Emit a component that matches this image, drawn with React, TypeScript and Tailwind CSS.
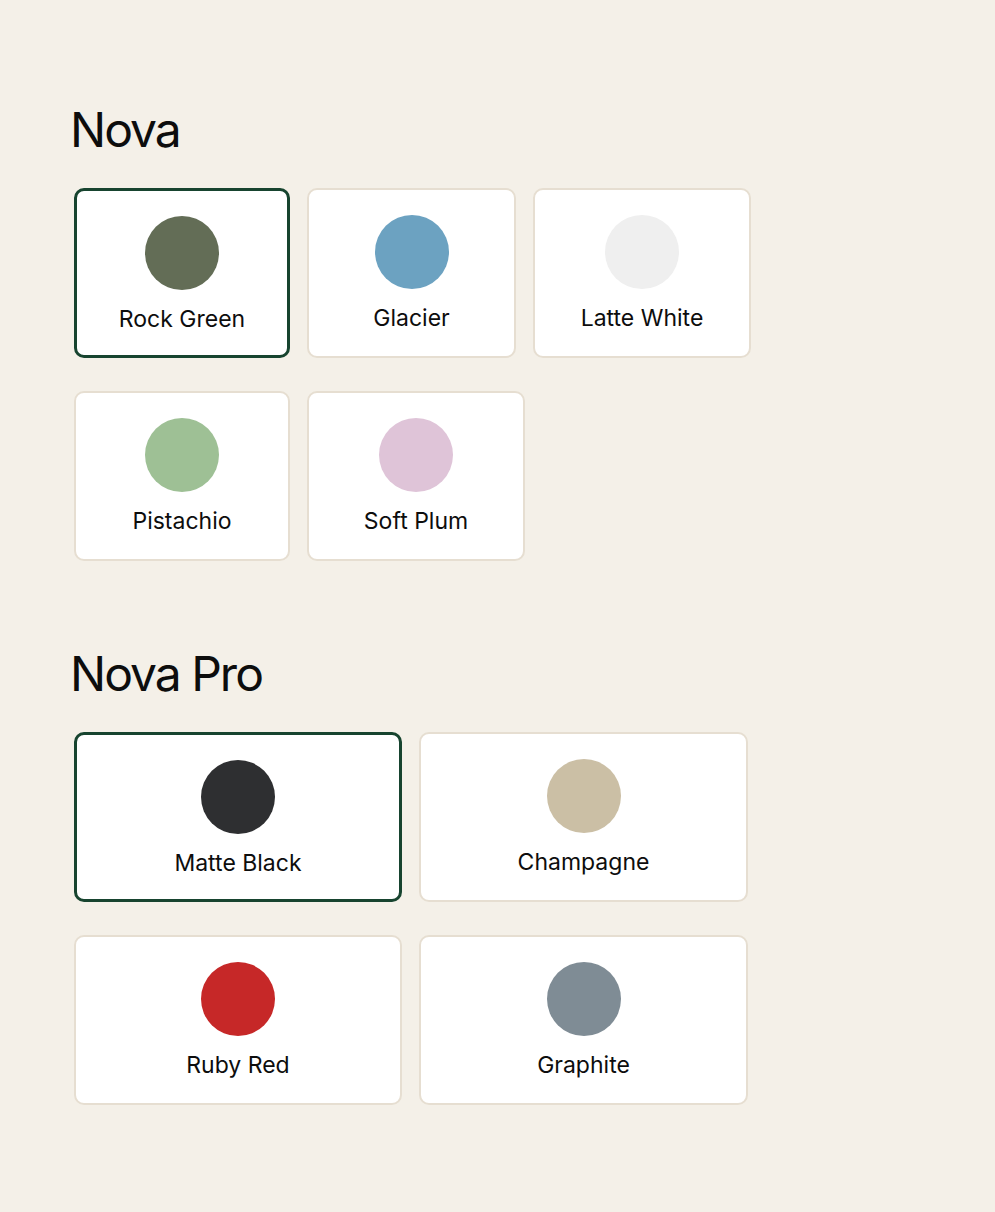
import React from "react";

type Swatch = { name: string; color: string; w: string; selected?: boolean };

function Card({ s }: { s: Swatch }) {
  return (
    <div
      className={`${s.w} h-[170px] shrink-0 rounded-[10px] bg-white flex flex-col items-center pt-[25px] ${
        s.selected ? "border-[3px] border-[#17442f]" : "border-2 border-[#e6ded1]"
      }`}
    >
      <div className="w-[74px] h-[74px] rounded-full" style={{ backgroundColor: s.color }} />
      <div className="mt-[15px] text-[23px] leading-[28px] text-[#0d0d0d]">{s.name}</div>
    </div>
  );
}

export default function App() {
  const nova: Swatch[][] = [
    [
      { name: "Rock Green", color: "#636d56", w: "w-[216px]", selected: true },
      { name: "Glacier", color: "#6ca2c1", w: "w-[209px]" },
      { name: "Latte White", color: "#efefef", w: "w-[218px]" },
    ],
    [
      { name: "Pistachio", color: "#9ec095", w: "w-[216px]" },
      { name: "Soft Plum", color: "#dfc4d8", w: "w-[218px]" },
    ],
  ];
  const pro: Swatch[][] = [
    [
      { name: "Matte Black", color: "#2e2f31", w: "w-[328px]", selected: true },
      { name: "Champagne", color: "#cbbfa5", w: "w-[329px]" },
    ],
    [
      { name: "Ruby Red", color: "#c62828", w: "w-[328px]" },
      { name: "Graphite", color: "#7f8c95", w: "w-[329px]" },
    ],
  ];

  const Section = ({ title, rows, className }: { title: string; rows: Swatch[][]; className?: string }) => (
    <section className={className}>
      <h2 className="text-[48px] leading-[48px] tracking-[-2px] text-[#0d0d0d] -ml-[4px]">{title}</h2>
      <div className="mt-[34px] flex flex-col gap-[33px]">
        {rows.map((r, i) => (
          <div key={i} className="flex gap-[17px]">
            {r.map((s) => (
              <Card key={s.name} s={s} />
            ))}
          </div>
        ))}
      </div>
    </section>
  );

  return (
    <div
      className="min-h-[1212px] w-full bg-[#f4f0e8] pl-[74px] pt-[106px]"
      style={{ fontFamily: "Inter, 'Noto Sans', sans-serif" }}
    >
      <Section title="Nova" rows={nova} />
      <Section title="Nova Pro" rows={pro} className="mt-[89px]" />
    </div>
  );
}
